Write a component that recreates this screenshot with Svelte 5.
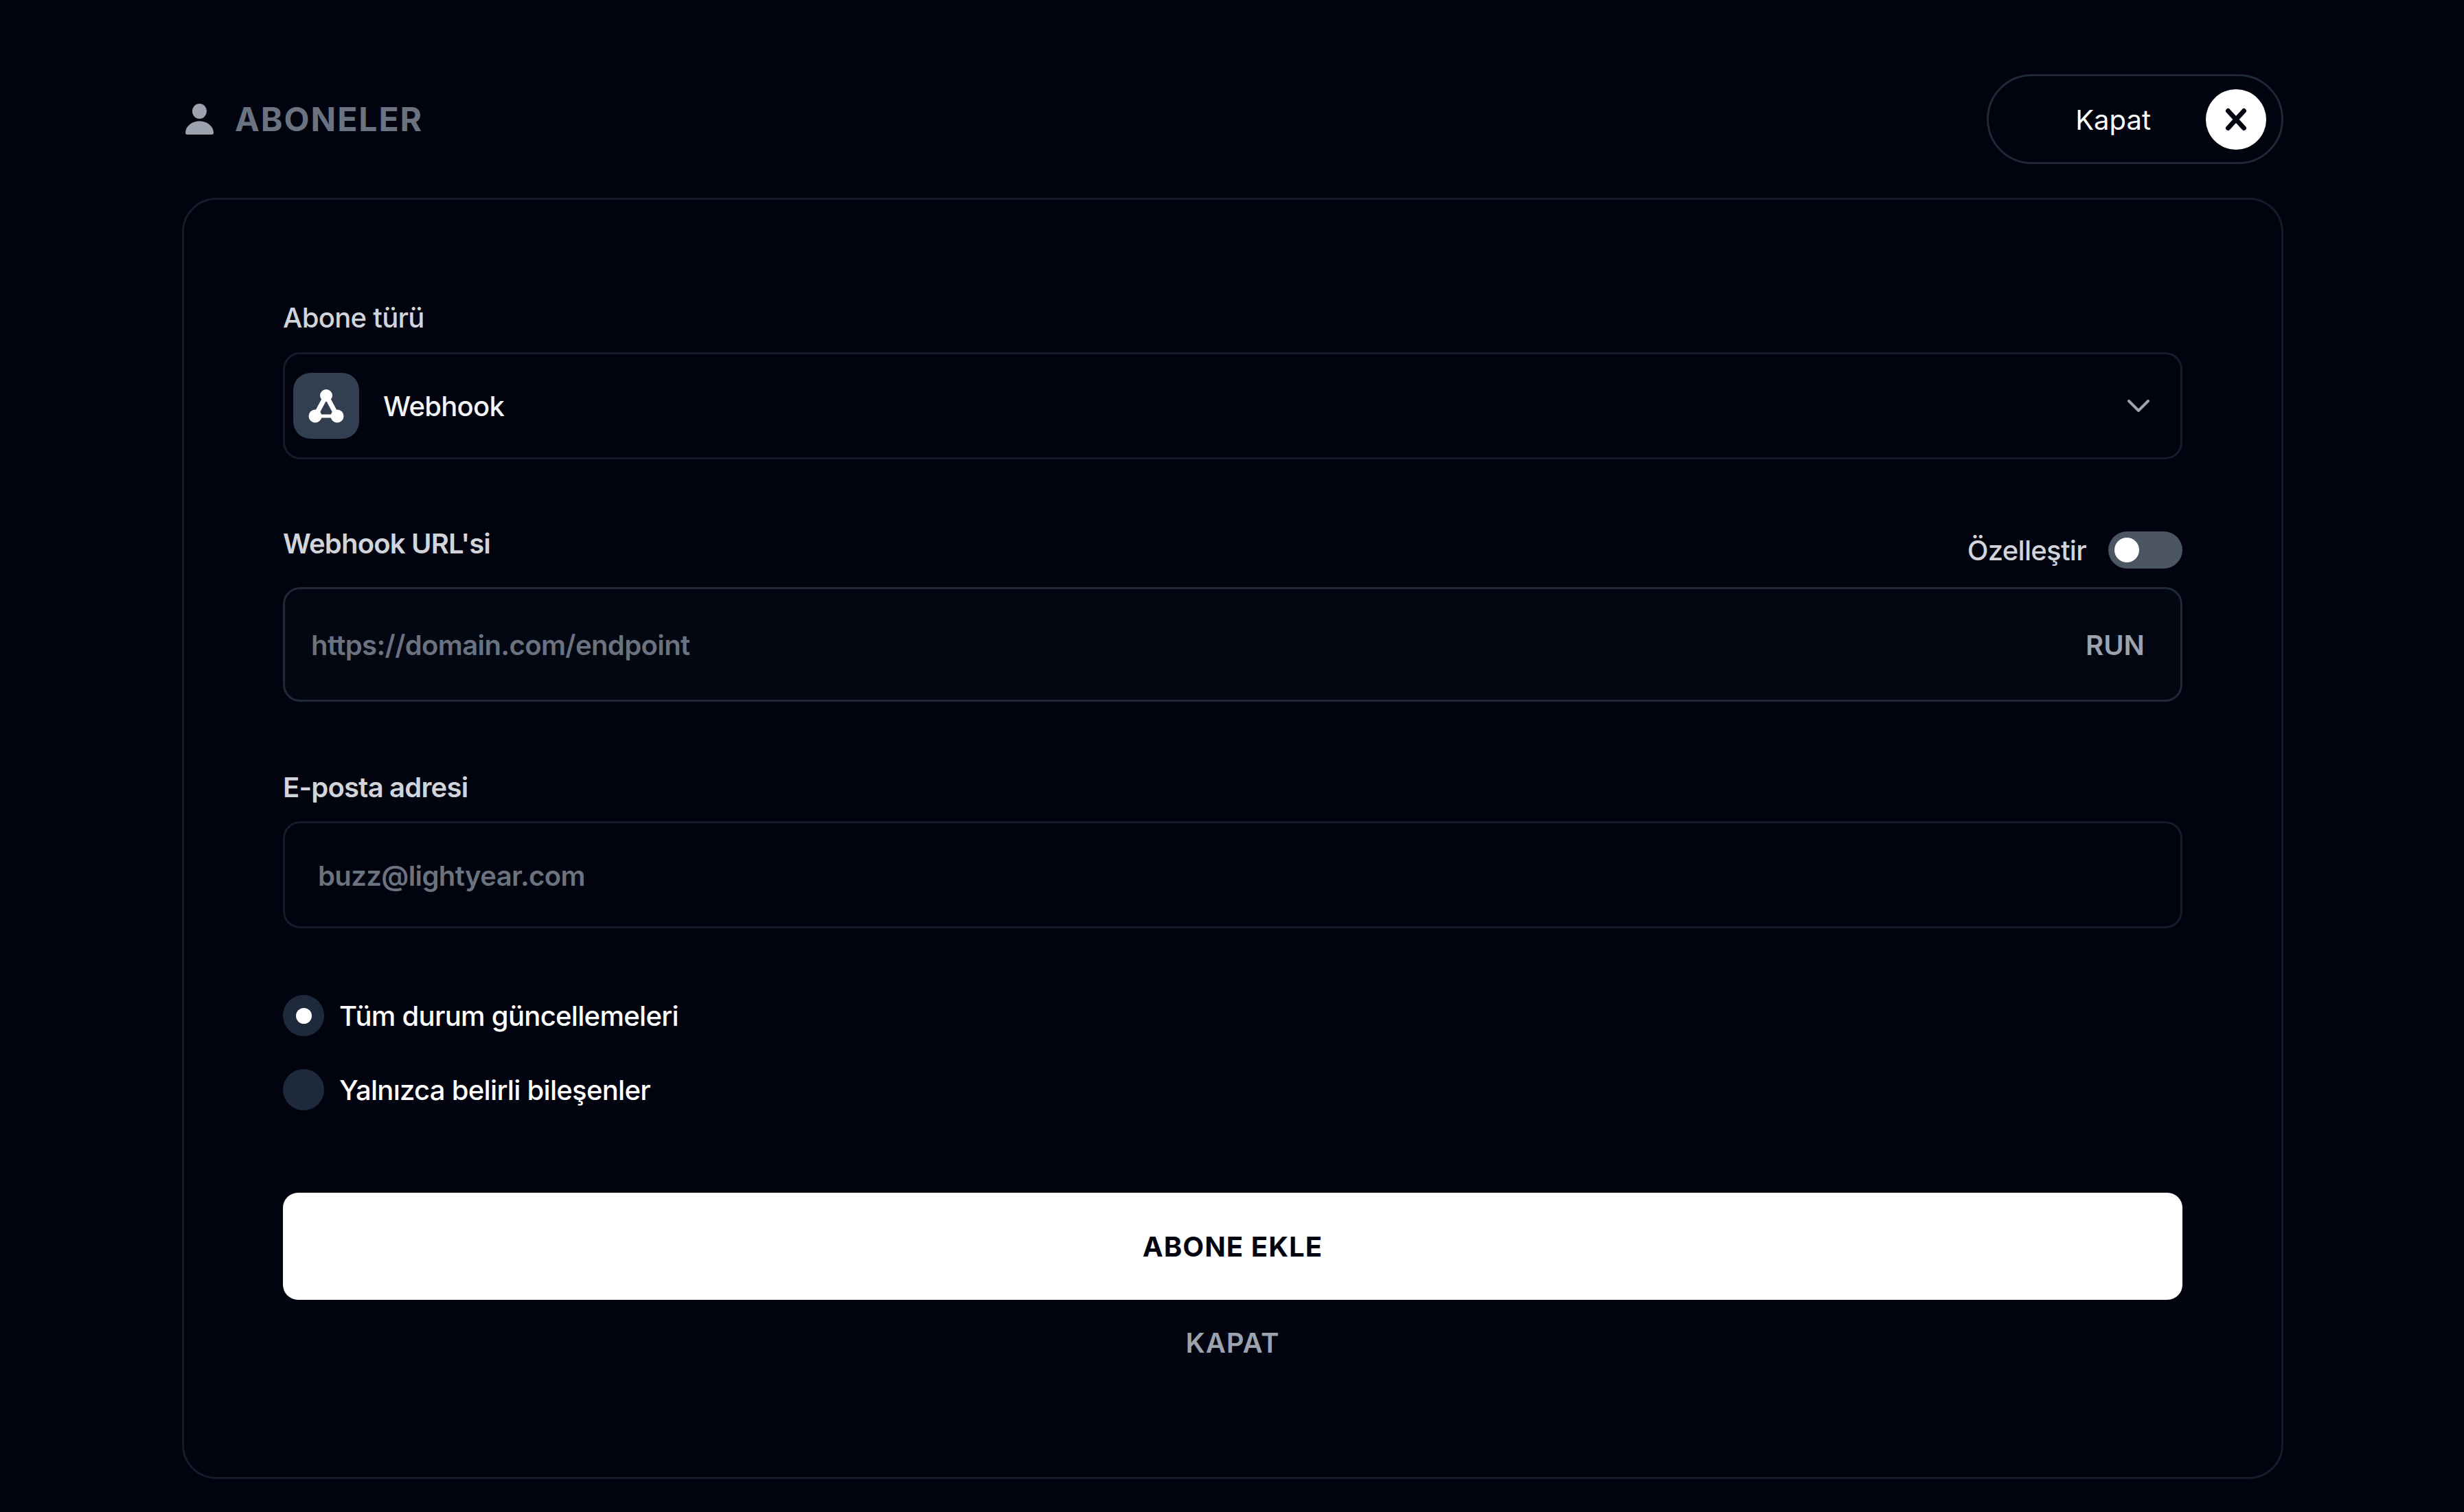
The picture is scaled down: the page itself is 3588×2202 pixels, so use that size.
<script lang="ts">
  let notify = $state('all');
  let customize = $state(false);
</script>

<div class="page">
  <header class="top">
    <h1 class="title">
      <svg class="person" viewBox="0 0 41 45" aria-hidden="true">
        <ellipse cx="20.5" cy="11" rx="10.5" ry="11" />
        <path d="M2.5 45C1 45 0 44 0 42.5 0 33 9.5 25.5 20.5 25.5S41 33 41 42.5C41 44 40 45 38.5 45Z" />
      </svg>
      ABONELER
    </h1>
    <button class="close-pill">
      <span class="close-text">Kapat</span>
      <span class="close-dot">
        <svg viewBox="0 0 88 88" aria-hidden="true"><path d="M32.5 31.5 55.5 56.5M55.5 31.5 32.5 56.5" /></svg>
      </span>
    </button>
  </header>

  <main class="card">
    <div class="label first">Abone türü</div>
    <button class="select">
      <span class="type-icon">
        <svg viewBox="0 0 96 96" aria-hidden="true">
          <path class="legs" d="M48 33 32 63M48 33 64 63" />
          <path class="base" d="M32 63H64" />
          <circle cx="48" cy="33" r="9" />
          <circle cx="32" cy="63" r="9.5" />
          <circle cx="64" cy="63" r="9.5" />
        </svg>
      </span>
      <span class="type-name">Webhook</span>
      <svg class="chevron" viewBox="0 0 32 18" aria-hidden="true"><path d="M2 2 16 16 30 2" /></svg>
    </button>

    <div class="label-row">
      <div class="label strong">Webhook URL'si</div>
      <div class="customize">
        <span>Özelleştir</span>
        <button class="toggle" class:on={customize} aria-label="Özelleştir" onclick={() => (customize = !customize)}>
          <span class="knob"></span>
        </button>
      </div>
    </div>
    <div class="url-field">
      <input type="text" placeholder="https://domain.com/endpoint" />
      <button class="run">RUN</button>
    </div>

    <div class="label strong email-label">E-posta adresi</div>
    <input class="email" type="text" placeholder="buzz@lightyear.com" />

    <div class="radios">
      <button class="radio" onclick={() => (notify = 'all')}>
        <span class="dot-wrap">{#if notify === 'all'}<span class="dot"></span>{/if}</span>
        Tüm durum güncellemeleri
      </button>
      <button class="radio" onclick={() => (notify = 'some')}>
        <span class="dot-wrap">{#if notify === 'some'}<span class="dot"></span>{/if}</span>
        Yalnızca belirli bileşenler
      </button>
    </div>

    <button class="submit">ABONE EKLE</button>
    <button class="cancel">KAPAT</button>
  </main>
</div>

<style>
  :global(body) {
    margin: 0;
    background: #01040e;
  }
  .page {
    box-sizing: border-box;
    width: 3588px;
    height: 2202px;
    padding: 108px 263px 0 265px;
    font-family: Inter, "Liberation Sans", sans-serif;
    color: #fff;
    overflow: hidden;
  }
  button {
    font: inherit;
    color: inherit;
    background: none;
    border: none;
    padding: 0;
    cursor: pointer;
  }
  .top {
    display: flex;
    justify-content: space-between;
    align-items: center;
    height: 131px;
    margin-bottom: 49px;
  }
  .title {
    display: flex;
    align-items: center;
    gap: 31px;
    margin: 0;
    font-size: 48px;
    line-height: 60px;
    font-weight: 700;
    letter-spacing: 2px;
    color: #6b7280;
  }
  .person {
    width: 41px;
    height: 45px;
    margin: 0 0 0 5px;
    fill: #9ca3af;
  }
  .close-pill {
    box-sizing: border-box;
    width: 432px;
    height: 131px;
    display: flex;
    align-items: center;
    justify-content: flex-end;
    gap: 80px;
    padding-right: 22px;
    border: 3px solid #1f2937;
    border-radius: 66px;
    font-size: 40px;
    line-height: 60px;
  }
  .close-text {
    padding-top: 2px;
  }
  .close-dot {
    width: 88px;
    height: 88px;
    border-radius: 50%;
    background: #fff;
  }
  .close-dot svg {
    display: block;
    fill: none;
    stroke: #01040e;
    stroke-width: 7;
    stroke-linecap: round;
  }
  .card {
    box-sizing: border-box;
    display: flex;
    flex-direction: column;
    height: 1866px;
    padding: 142px 144px 0;
    border: 3px solid #151c2b;
    border-radius: 50px;
  }
  .label {
    font-size: 40px;
    line-height: 60px;
    font-weight: 500;
    letter-spacing: -0.7px;
    color: #d1d5db;
  }
  .label.first {
    margin-bottom: 20px;
  }
  .label.strong {
    font-weight: 600;
    letter-spacing: -0.8px;
  }
  .select {
    box-sizing: border-box;
    display: flex;
    align-items: center;
    height: 156px;
    padding: 0 45px 0 12px;
    border: 3px solid #151c2b;
    border-radius: 25px;
    font-size: 40px;
    font-weight: 500;
    letter-spacing: -0.7px;
    color: #f3f4f6;
    text-align: left;
  }
  .type-icon {
    flex: none;
    width: 96px;
    height: 96px;
    margin-right: 35px;
    border-radius: 25px;
    background: #323f50;
  }
  .type-icon svg {
    display: block;
    fill: #fff;
  }
  .legs {
    fill: none;
    stroke: #fff;
    stroke-width: 7;
  }
  .base {
    fill: none;
    stroke: #fff;
    stroke-width: 5;
  }
  .type-name {
    flex: 1;
  }
  .chevron {
    width: 32px;
    height: 18px;
    fill: none;
    stroke: #9ca3af;
    stroke-width: 4;
    stroke-linecap: round;
    stroke-linejoin: round;
  }
  .label-row {
    display: flex;
    justify-content: space-between;
    align-items: flex-start;
    margin-top: 93px;
    margin-bottom: 24px;
  }
  .customize {
    display: flex;
    align-items: center;
    gap: 32px;
    height: 60px;
    margin-top: 9px;
    font-size: 40px;
    font-weight: 500;
    letter-spacing: -0.7px;
    color: #d1d5db;
  }
  .toggle {
    box-sizing: border-box;
    display: flex;
    width: 108px;
    height: 54px;
    padding: 9px;
    border-radius: 27px;
    background: #4b5563;
  }
  .toggle.on {
    justify-content: flex-end;
  }
  .knob {
    width: 36px;
    height: 36px;
    border-radius: 50%;
    background: #fff;
  }
  .url-field {
    box-sizing: border-box;
    display: flex;
    align-items: center;
    height: 167px;
    padding: 2px 52px 0 36px;
    border: 3px solid #1f2937;
    border-radius: 25px;
    background: #030712;
  }
  input {
    box-sizing: border-box;
    min-width: 0;
    border: none;
    outline: none;
    background: none;
    font: inherit;
    font-size: 40px;
    font-weight: 600;
    letter-spacing: -0.6px;
    color: #fff;
  }
  input::placeholder {
    opacity: 1;
    color: #6b7280;
  }
  .url-field input {
    flex: 1;
  }
  .run {
    font-size: 40px;
    font-weight: 600;
    color: #9ca3af;
  }
  .email-label {
    margin-top: 95px;
    margin-bottom: 19px;
  }
  .email {
    height: 156px;
    padding: 2px 48px 0;
    border: 3px solid #151c2b;
    border-radius: 25px;
  }
  .radios {
    display: flex;
    flex-direction: column;
    gap: 48px;
    margin-top: 97px;
  }
  .radio {
    display: flex;
    align-items: center;
    gap: 22px;
    height: 60px;
    font-size: 40px;
    font-weight: 500;
    letter-spacing: -0.7px;
    color: #fff;
  }
  .dot-wrap {
    display: flex;
    align-items: center;
    justify-content: center;
    width: 60px;
    height: 60px;
    border-radius: 50%;
    background: #1e293b;
  }
  .dot {
    width: 23px;
    height: 23px;
    border-radius: 50%;
    background: #fff;
  }
  .submit {
    height: 156px;
    margin-top: 120px;
    border-radius: 22px;
    background: #fff;
    color: #01040e;
    font-size: 40px;
    font-weight: 700;
    letter-spacing: 1.1px;
  }
  .cancel {
    align-self: center;
    margin-top: 33px;
    font-size: 40px;
    line-height: 60px;
    font-weight: 600;
    letter-spacing: 1px;
    color: #9ca3af;
  }
</style>
